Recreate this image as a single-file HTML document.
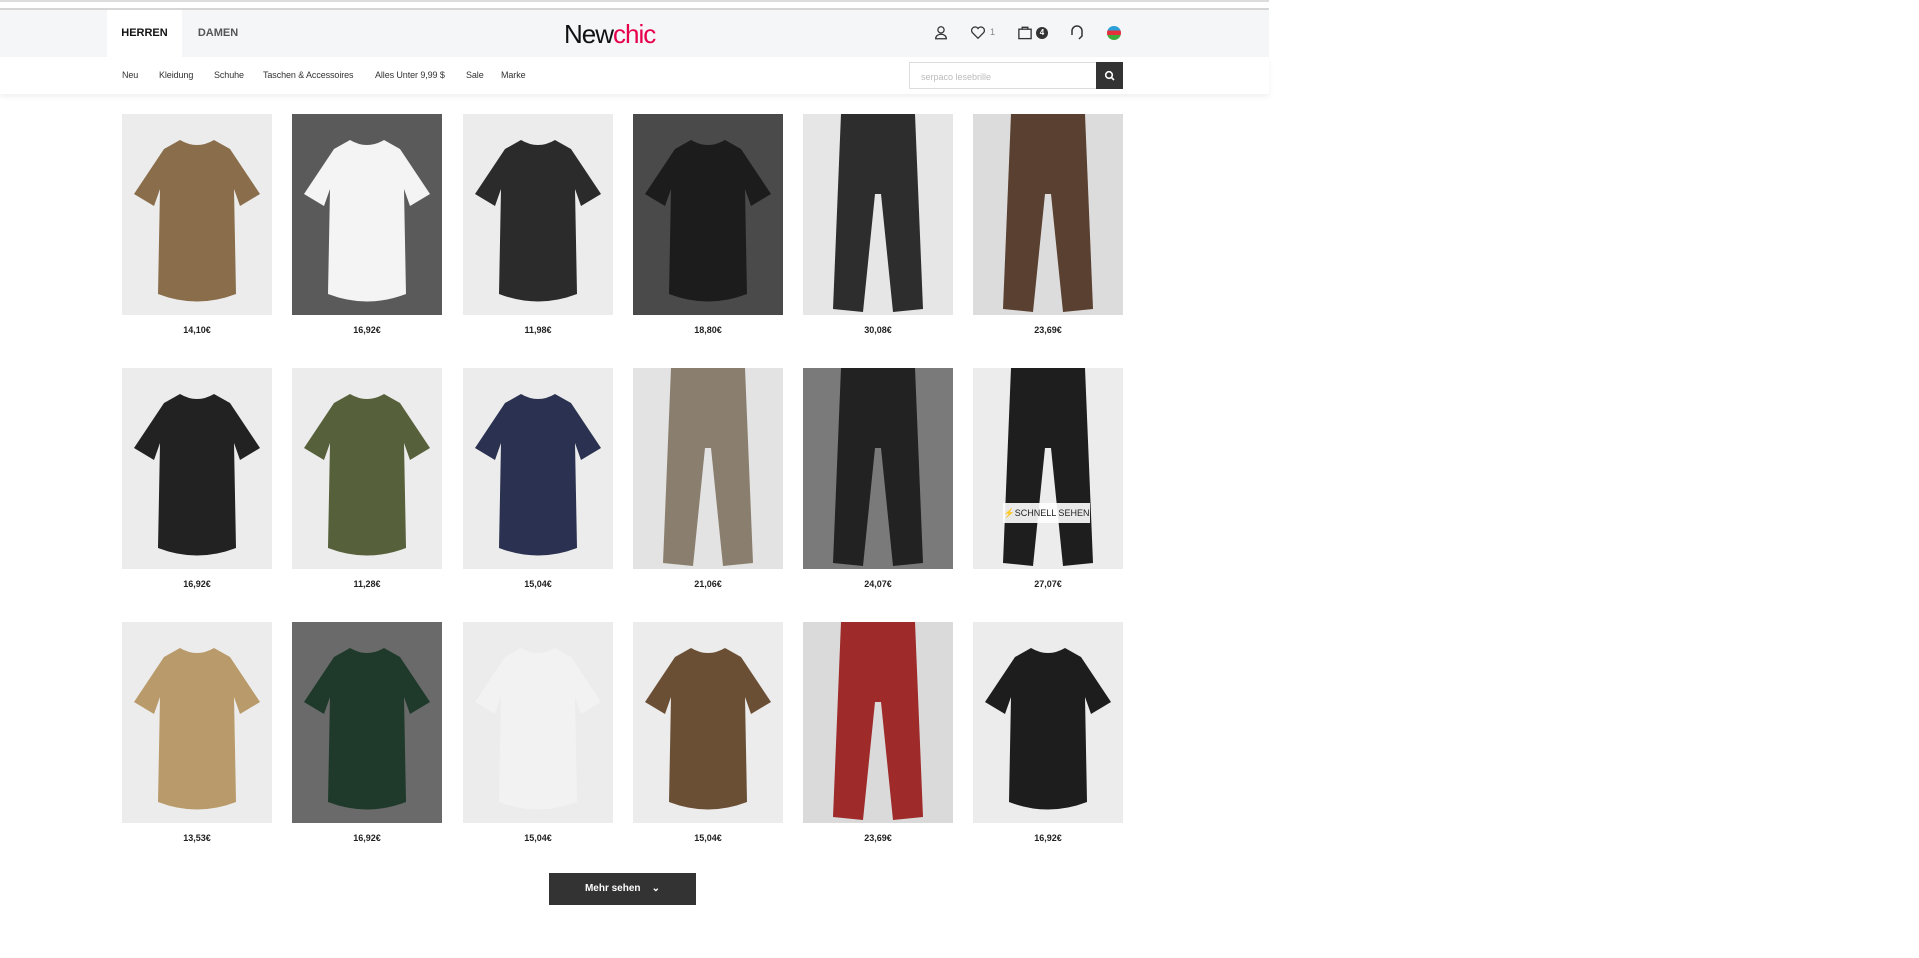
<!DOCTYPE html>
<html><head><meta charset="utf-8"><style>
*{margin:0;padding:0;box-sizing:border-box}
body{width:1919px;height:958px;background:#fff;font-family:"Liberation Sans",Arial,sans-serif;position:relative;overflow:hidden;color:#222}
.l1{position:absolute;left:0;top:0;width:1269px;height:2px;background:#ddd}
.l2{position:absolute;left:0;top:8px;width:1269px;height:2px;background:#d6d6d6}
.hdr{position:absolute;left:0;top:10px;width:1269px;height:47px;background:#f5f6f8}
.tab{position:absolute;top:10px;height:47px;line-height:47px;font-size:11px;font-weight:bold;text-align:center}
.logo{position:absolute;left:564px;top:14px;font-size:26px;letter-spacing:-1px;color:#111;line-height:40px}
.logo span{color:#e6004c}
.nav{position:absolute;left:0;top:57px;width:1269px;height:37px;background:#fff;box-shadow:0 3px 5px rgba(0,0,0,.06)}
.nav a{position:absolute;top:13px;font-size:9px;color:#333;text-decoration:none;letter-spacing:-0.1px}
.search{position:absolute;left:909px;top:62px;width:188px;height:27px;border:1px solid #ddd;background:#fff;font-size:9px;color:#bbb;padding:9px 0 0 11px}
.sbtn{position:absolute;left:1096px;top:62px;width:27px;height:27px;background:#333}
.card{position:absolute;width:150px;height:201px;overflow:hidden}
.price{position:absolute;width:150px;text-align:center;font-size:9px;font-weight:bold;color:#222}
.more{position:absolute;left:549px;top:873px;width:147px;height:32px;background:#333;color:#fff;font-size:10px;font-weight:bold;text-align:center;line-height:32px}
.qs{position:absolute;left:1003px;top:503px;width:87px;height:20px;background:rgba(255,255,255,.9);font-size:9px;line-height:20px;text-align:center;color:#222}
</style></head><body>
<div class="l1"></div><div class="l2"></div>
<div class="hdr"></div>
<div class="tab" style="left:107px;width:75px;background:#fff;color:#111">HERREN</div>
<div class="tab" style="left:182px;width:72px;color:#555">DAMEN</div>
<div class="logo">New<span>chic</span></div>
<svg style="position:absolute;left:933px;top:24px" width="16" height="17" viewBox="0 0 18 18" fill="none" stroke="#333" stroke-width="1.4"><circle cx="9" cy="6" r="3.5"/><path d="M3 16c0-3 2.5-5 6-5s6 2 6 5z"/></svg>
<svg style="position:absolute;left:970px;top:25px" width="16" height="15" viewBox="0 0 18 16" fill="none" stroke="#333" stroke-width="1.4"><path d="M9 14.5L2.5 8A3.6 3.6 0 0 1 9 3.5 3.6 3.6 0 0 1 15.5 8z"/></svg>
<div style="position:absolute;left:990px;top:27px;font-size:9px;color:#888">1</div>
<svg style="position:absolute;left:1017px;top:24px" width="16" height="17" viewBox="0 0 17 17" fill="none" stroke="#333" stroke-width="1.4"><rect x="2" y="5" width="13" height="10"/><path d="M5.5 5V3h6v2"/></svg>
<div style="position:absolute;left:1036px;top:27px;width:12px;height:12px;border-radius:50%;background:#333;color:#fff;font-size:8px;text-align:center;line-height:12px;font-weight:bold">4</div>
<svg style="position:absolute;left:1069px;top:24px" width="16" height="17" viewBox="0 0 16 17" fill="none" stroke="#333" stroke-width="1.5"><path d="M3 11V7a5 5 0 0 1 10 0v4M3 8v3M13 8v4l-3 3"/></svg>
<div style="position:absolute;left:1107px;top:26px;width:14px;height:14px;border-radius:50%;overflow:hidden;background:linear-gradient(#2a9fd8 0 33%,#e4303b 33% 66%,#3cab3c 66%)"></div>
<div class="nav">
<a style="left:122px">Neu</a><a style="left:159px">Kleidung</a><a style="left:214px">Schuhe</a><a style="left:263px">Taschen &amp; Accessoires</a><a style="left:375px">Alles Unter 9,99 $</a><a style="left:466px">Sale</a><a style="left:501px">Marke</a>
</div>
<div class="search">serpaco lesebrille</div>
<div class="sbtn"><svg style="position:absolute;left:8px;top:8px" width="11" height="11" viewBox="0 0 11 11" fill="none" stroke="#fff" stroke-width="1.6"><circle cx="5" cy="5" r="3.3"/><path d="M7.5 7.5l2.5 2.5"/></svg></div>

<div id="g"></div>
<div class="qs">⚡SCHNELL SEHEN</div>
<div class="more">Mehr sehen &nbsp;&nbsp;&nbsp;⌄</div>
<script>
var xs=[122,292,463,633,803,973],ys=[114,368,622];
var tee="M42 35 L58 26 Q75 36 92 26 L108 35 L138 80 L118 92 L112 75 L114 180 Q75 195 36 180 L38 75 L32 92 L12 80 Z";
var pants="M38 0 L112 0 L120 195 L90 198 L78 80 L72 80 L60 198 L30 195 Z";
var d=[
["#ececec",tee,"#8a6d4b"],["#5a5a5a",tee,"#f4f4f4"],["#ececec",tee,"#2b2b2b"],["#4a4a4a",tee,"#1c1c1c"],["#e6e6e6",pants,"#2d2d2d"],["#dcdcdc",pants,"#5a4030"],
["#ececec",tee,"#222"],["#ececec",tee,"#56603a"],["#ececec",tee,"#2b3150"],["#e3e3e3",pants,"#8a7f6e"],["#7a7a7a",pants,"#222"],["#ececec",pants,"#1e1e1e"],
["#ececec",tee,"#b99a6a"],["#6a6a6a",tee,"#1f3a2b"],["#ececec",tee,"#f2f2f2"],["#ececec",tee,"#6a4f35"],["#dadada",pants,"#9e2a2a"],["#ececec",tee,"#1d1d1d"]];
var p=["14,10€","16,92€","11,98€","18,80€","30,08€","23,69€","16,92€","11,28€","15,04€","21,06€","24,07€","27,07€","13,53€","16,92€","15,04€","15,04€","23,69€","16,92€"];
var h="";
for(var i=0;i<18;i++){var x=xs[i%6],y=ys[Math.floor(i/6)];
h+='<div class="card" style="left:'+x+'px;top:'+y+'px;background:'+d[i][0]+'"><svg width="150" height="201" viewBox="0 0 150 201"><path d="'+d[i][1]+'" fill="'+d[i][2]+'"/></svg></div><div class="price" style="left:'+x+'px;top:'+(y+211)+'px">'+p[i]+'</div>';}
document.getElementById("g").innerHTML=h;
</script>
</body></html>
